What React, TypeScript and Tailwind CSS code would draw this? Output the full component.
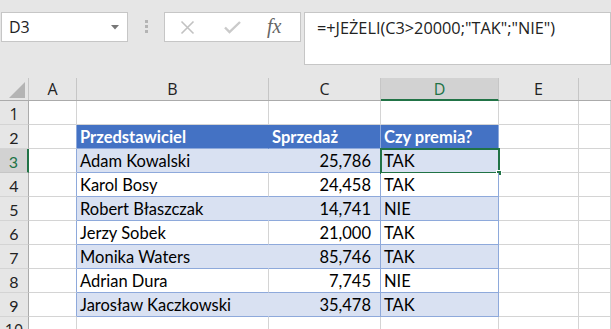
import React from 'react'

type Row = { name: string; sales: string; bonus: string }

const data: Row[] = [
  { name: 'Adam Kowalski', sales: '25,786', bonus: 'TAK' },
  { name: 'Karol Bosy', sales: '24,458', bonus: 'TAK' },
  { name: 'Robert Błaszczak', sales: '14,741', bonus: 'NIE' },
  { name: 'Jerzy Sobek', sales: '21,000', bonus: 'TAK' },
  { name: 'Monika Waters', sales: '85,746', bonus: 'TAK' },
  { name: 'Adrian Dura', sales: '7,745', bonus: 'NIE' },
  { name: 'Jarosław Kaczkowski', sales: '35,478', bonus: 'TAK' },
]

const cellFont = "font-['Lato','Liberation_Sans',sans-serif] text-[16.5px] leading-none text-black"

const RowHead = ({ n, active }: { n: number; active?: boolean }) => (
  <div
    className={
      active
        ? 'flex w-[29px] shrink-0 items-center justify-center border-b border-r-2 border-b-[#c6c6c6] border-r-[#217346] bg-[#d2d2d2] pt-[2px] text-[16px] text-[#217346]'
        : 'flex w-[29px] shrink-0 items-center justify-center border-b border-r border-b-[#d4d4d4] border-r-[#ababab] bg-[#e6e6e6] pt-[2px] text-[16px] text-[#222]'
    }
  >
    {n}
  </div>
)

const Blank = ({ w, last }: { w: string; last?: boolean }) => (
  <div className={`${w} ${last ? 'flex-1' : 'shrink-0'} border-b border-r border-[#d4d4d4]`} />
)

const App = () => {
  return (
    <div className="h-[329px] w-[611px] overflow-hidden bg-white font-['Open_Sans','Liberation_Sans',sans-serif]">
      {/* formula bar */}
      <div className="flex h-[78px] items-start bg-[#e6e6e6] pt-[12px]">
        <div className="ml-[1px] flex h-[30px] w-[127px] shrink-0 items-center justify-between border border-[#c6c6c6] bg-white pl-[7px] pr-[8px]">
          <span className="text-[16px] text-[#222]">D3</span>
          <svg width="8" height="5" viewBox="0 0 8 5">
            <path d="M0 0h8L4 4.5z" fill="#777" />
          </svg>
        </div>
        <div className="ml-[17px] mt-[8px] flex flex-col gap-[2px]">
          <div className="h-[3px] w-[3px] bg-[#b4b4b4]" />
          <div className="h-[3px] w-[3px] bg-[#b4b4b4]" />
          <div className="h-[3px] w-[3px] bg-[#b4b4b4]" />
        </div>
        <div className="ml-[16px] flex h-[30px] w-[137px] shrink-0 items-center border border-[#c6c6c6] bg-white">
          <svg className="ml-[15px]" width="15" height="15" viewBox="0 0 15 15">
            <path d="M1.5 1.5l12 12M13.5 1.5l-12 12" stroke="#c2c2c2" strokeWidth="1.6" />
          </svg>
          <svg className="ml-[29px]" width="17" height="14" viewBox="0 0 17 14">
            <path d="M1 7.5l4.5 4.5L16 2" stroke="#cacaca" strokeWidth="2.4" fill="none" />
          </svg>
          <span className="ml-[26px] -mt-[2px] font-['Liberation_Serif',serif] text-[20px] italic leading-none text-[#666]">
            fx
          </span>
        </div>
        <div className="ml-[3px] h-[53px] flex-1 border border-[#c6c6c6] bg-white pl-[12px] pt-[3px]">
          <span className="text-[16.3px] text-[#222]">=+JEŻELI(C3&gt;20000;"TAK";"NIE")</span>
        </div>
      </div>

      {/* column headers */}
      <div className="flex h-[23px] border-b border-[#ababab] bg-[#e6e6e6] text-[16px] text-[#222]">
        <div className="relative w-[29px] shrink-0 border-r border-[#c6c6c6]">
          <svg className="absolute bottom-[2px] right-[3px]" width="16" height="16" viewBox="0 0 16 16">
            <path d="M16 0V16H0z" fill="#b4b4b4" />
          </svg>
        </div>
        <div className="flex w-[48px] shrink-0 items-center justify-center border-r border-[#c6c6c6]">A</div>
        <div className="flex w-[192px] shrink-0 items-center justify-center border-r border-[#c6c6c6]">B</div>
        <div className="flex w-[112px] shrink-0 items-center justify-center border-r border-[#c6c6c6]">C</div>
        <div className="-mb-[1px] flex w-[118px] shrink-0 items-center justify-center border-b-2 border-r border-b-[#217346] border-r-[#c6c6c6] bg-[#d2d2d2] text-[#217346]">
          D
        </div>
        <div className="flex w-[80px] shrink-0 items-center justify-center border-r border-[#c6c6c6]">E</div>
        <div className="flex-1" />
      </div>

      {/* row 1 */}
      <div className="flex h-[24px]">
        <RowHead n={1} />
        <Blank w="w-[48px]" />
        <Blank w="w-[192px]" />
        <Blank w="w-[112px]" />
        <Blank w="w-[118px]" />
        <Blank w="w-[80px]" />
        <Blank w="" last />
      </div>

      {/* row 2: table header */}
      <div className={`flex h-[24px] ${cellFont}`}>
        <RowHead n={2} />
        <div className="w-[48px] shrink-0 border-b border-r border-b-[#d4d4d4] border-r-[#8ea9db]" />
        <div className="flex w-[192px] shrink-0 items-end border-b border-r border-b-[#8ea9db] border-r-[#4472c4] bg-[#4472c4] pb-[3px] pl-[3px] font-bold text-white">
          Przedstawiciel
        </div>
        <div className="flex w-[112px] shrink-0 items-end border-b border-r border-b-[#8ea9db] border-r-[#8ea9db] bg-[#4472c4] pb-[3px] pl-[3px] font-bold text-white">
          Sprzedaż
        </div>
        <div className="flex w-[118px] shrink-0 items-end border-b border-r border-[#8ea9db] bg-[#4472c4] pb-[3px] pl-[3px] font-bold text-white">
          Czy premia?
        </div>
        <Blank w="w-[80px]" />
        <Blank w="" last />
      </div>

      {data.map((r, i) => {
        const band = i % 2 === 0
        const fill = band ? 'bg-[#d9e1f2]' : 'bg-white'
        return (
          <div key={r.name} className={`flex h-[24px] ${cellFont}`}>
            <RowHead n={i + 3} active={i === 0} />
            <div className="w-[48px] shrink-0 border-b border-r border-b-[#d4d4d4] border-r-[#8ea9db]" />
            <div
              className={`flex w-[192px] shrink-0 items-end border-b border-r border-b-[#8ea9db] pb-[3px] pl-[3px] ${fill} ${
                band ? 'border-r-[#d9e1f2]' : 'border-r-[#d4d4d4]'
              }`}
            >
              {r.name}
            </div>
            <div
              className={`flex w-[112px] shrink-0 items-end justify-end border-b border-r border-[#8ea9db] pb-[3px] pr-[9px] ${fill}`}
            >
              {r.sales}
            </div>
            <div
              className={`relative flex w-[118px] shrink-0 items-end border-b border-r border-[#8ea9db] pb-[3px] pl-[3px] ${fill}`}
            >
              {r.bonus}
              {i === 0 && (
                <div className="absolute -left-[1px] -top-[1px] h-[26px] w-[120px] border-2 border-[#217346]">
                  <div className="absolute -bottom-[4px] -right-[4px] h-[6px] w-[6px] border border-white bg-[#217346]" />
                </div>
              )}
            </div>
            <Blank w="w-[80px]" />
            <Blank w="" last />
          </div>
        )
      })}

      {/* row 10 */}
      <div className="flex h-[24px]">
        <RowHead n={10} />
        <Blank w="w-[48px]" />
        <Blank w="w-[192px]" />
        <Blank w="w-[112px]" />
        <Blank w="w-[118px]" />
        <Blank w="w-[80px]" />
        <Blank w="" last />
      </div>
    </div>
  )
}

export default App
